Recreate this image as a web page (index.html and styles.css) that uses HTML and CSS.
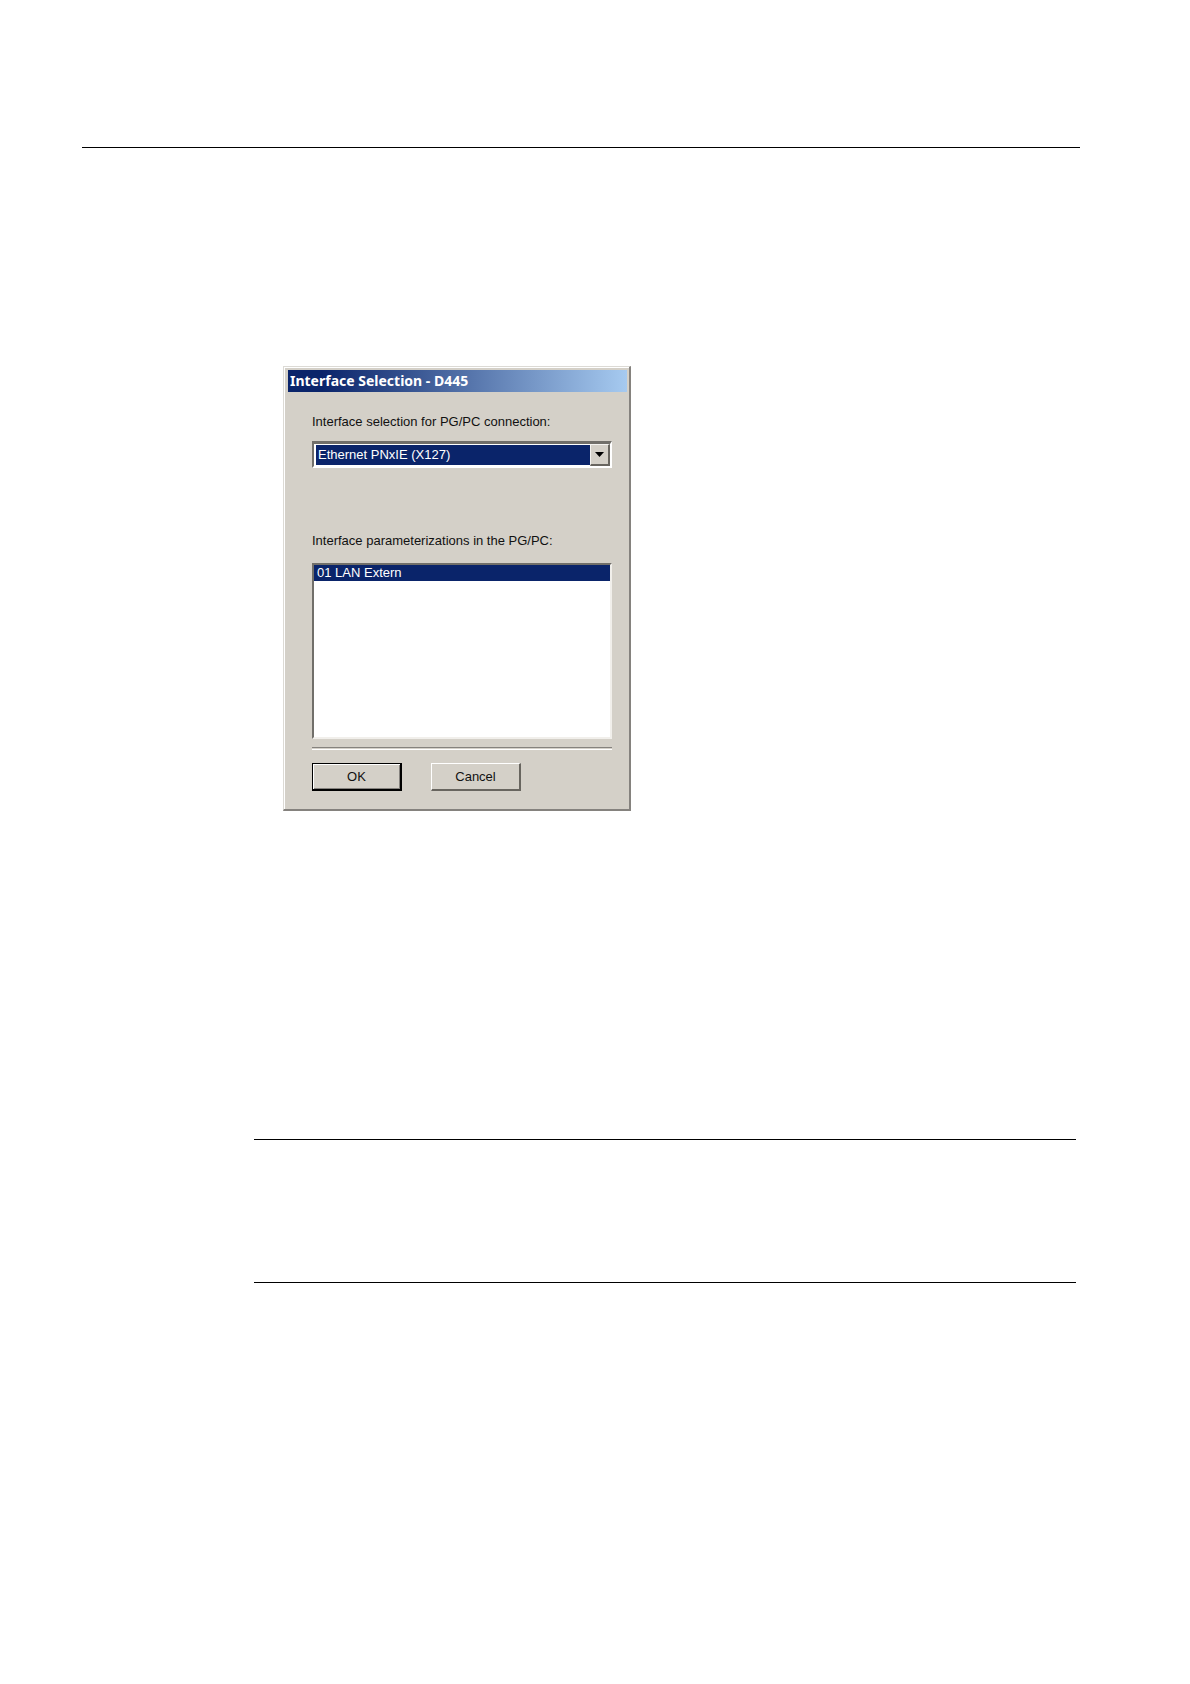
FILE: index.html
```html
<!DOCTYPE html>
<html lang="en">
<head>
<meta charset="utf-8">
<meta name="viewport" content="width=device-width, initial-scale=1">
<title>Interface Selection - D445</title>
<link rel="stylesheet" href="styles.css">
</head>
<body>
<main class="page">
  <hr class="rule">
  <div class="content">
    <form class="dialog" aria-labelledby="dialog-title">
      <h1 class="titlebar" id="dialog-title">Interface Selection - D445</h1>
      <div class="dialog-body">
        <label class="label" for="interface">Interface selection for PG/PC connection:</label>
        <div class="combo">
          <select class="combo-select" id="interface">
            <option>Ethernet PNxIE (X127)</option>
          </select>
          <span class="combo-arrow" aria-hidden="true">
            <svg width="9" height="5" viewBox="0 0 18 10"><path d="M0 0H18L9 10Z"/></svg>
          </span>
        </div>
        <label class="label label-list" for="parameters">Interface parameterizations in the PG/PC:</label>
        <select class="list" id="parameters" size="8">
          <option class="list-item" selected>01 LAN Extern</option>
        </select>
        <hr class="groove">
        <div class="actions">
          <button class="button button-default" type="submit">OK</button>
          <button class="button" type="button">Cancel</button>
        </div>
      </div>
    </form>
    <section class="note">
    </section>
  </div>
</main>
</body>
</html>
```

FILE: styles.css
```css
* {
  box-sizing: border-box;
}

body {
  margin: 0;
  background: #fff;
  color: #111;
  font: 13px/16px "Liberation Sans", Arial, sans-serif;
}

.page {
  min-height: 100vh;
  padding: 147px 110px 80px 82px;
}

.rule {
  height: 1px;
  margin: 0;
  border: 0;
  background: #000;
}

.content {
  padding: 218px 4px 0 172px;
}

.dialog {
  width: 348px;
  margin-left: 29px;
  padding: 3px 2px 18px 4px;
  border: 1px solid #dcdad5;
  border-right: 2px solid #85827e;
  border-bottom: 2px solid #85827e;
  background: #d4d0c8;
  box-shadow: inset 1px 1px #fff;
}

.titlebar {
  margin: 0;
  padding: 0 2px;
  background: linear-gradient(to right, #0a246a 10%, #a6caf0);
  color: #fff;
  font: bold 14px/22px "Noto Sans", "Open Sans", sans-serif;
}

.dialog-body {
  display: flex;
  flex-direction: column;
  padding: 22px 15px 0 24px;
}

.label {
  line-height: 16px;
}

.combo {
  position: relative;
  height: 27px;
  margin-top: 11px;
  border: 2px solid #716f6a;
  border-top-width: 3px;
  border-right-color: #fff;
  border-bottom-color: #fff;
  background: #fff;
}

.combo-select {
  appearance: none;
  display: block;
  width: 100%;
  height: 100%;
  margin: 0;
  padding: 0 22px 0 2px;
  border: 1px solid #fff;
  border-left-width: 2px;
  border-radius: 0;
  outline: 0;
  background: #0a246a;
  color: #fff;
  font: inherit;
}

.combo-arrow {
  position: absolute;
  top: 0;
  right: 0;
  bottom: 0;
  display: flex;
  align-items: center;
  justify-content: center;
  width: 20px;
  border: 1px solid #f4f3f0;
  border-right: 2px solid #68655f;
  border-bottom: 2px solid #68655f;
  background: #d4d0c8;
  pointer-events: none;
}

.label-list {
  margin-top: 65px;
}

.list {
  appearance: none;
  display: block;
  width: 100%;
  height: 176px;
  margin: 14px 0 0;
  padding: 0;
  overflow: hidden;
  border: 2px solid #716f6a;
  border-right-color: #f1efeb;
  border-bottom-color: #f1efeb;
  border-radius: 0;
  outline: 0;
  background: #fff;
  font: inherit;
}

.list-item {
  min-height: 16px;
  padding: 0 3px;
  line-height: 16px;
}

.list-item:checked {
  background: #0a246a linear-gradient(#0a246a, #0a246a);
  color: #fff;
}

.groove {
  width: 100%;
  height: 3px;
  margin: 8px 0 0;
  border: 0;
  border-top: 1px solid #85827e;
  border-bottom: 1px solid #fff;
}

.actions {
  display: flex;
  gap: 29px;
  margin-top: 13px;
}

.button {
  width: 90px;
  height: 28px;
  padding: 0;
  border: 1px solid #fff;
  border-right: 2px solid #68655f;
  border-bottom: 2px solid #68655f;
  border-radius: 0;
  background: #d4d0c8;
  color: #111;
  font: inherit;
}

.button-default {
  border: 1px solid #000;
  border-right-width: 2px;
  border-bottom-width: 2px;
  box-shadow: inset 1px 1px #fff, inset -1px -1px #85827e;
}

.note {
  height: 144px;
  margin-top: 328px;
  border-top: 1px solid #000;
  border-bottom: 1px solid #000;
}
```
